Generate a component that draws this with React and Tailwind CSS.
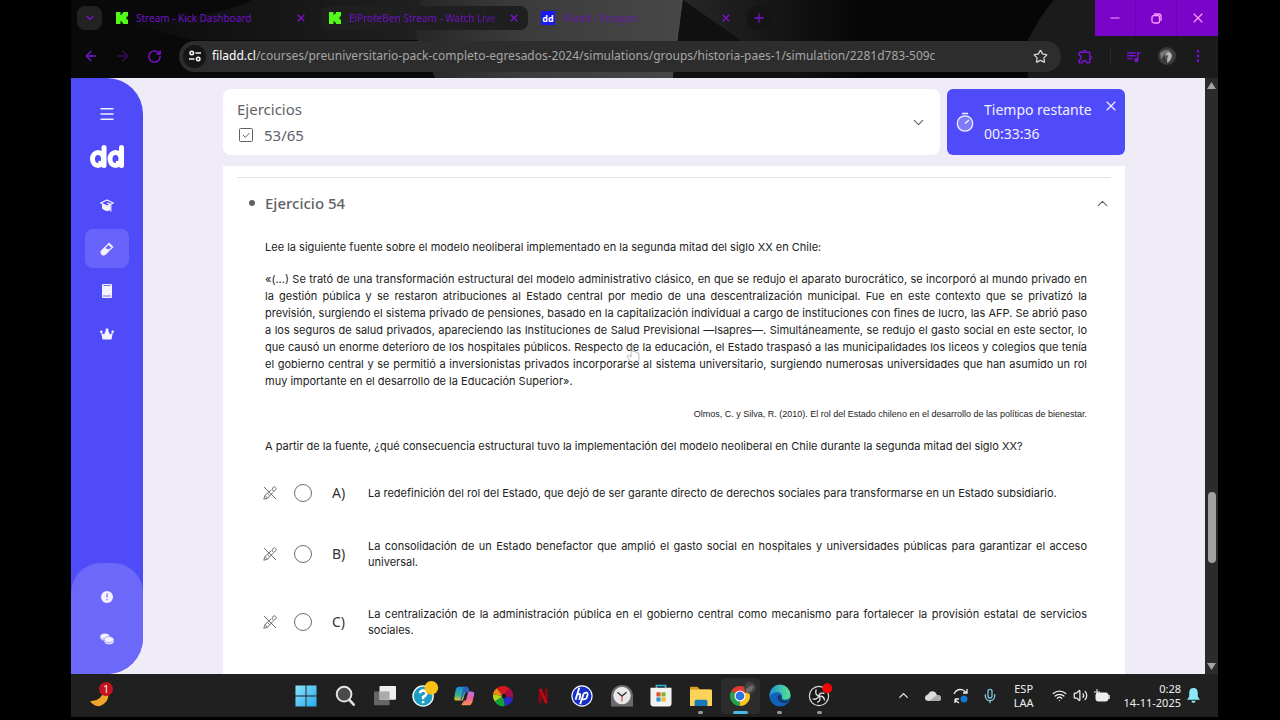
import {
  ArrowLeft,
  ArrowRight,
  ChevronDown,
  ChevronUp,
  EllipsisVertical,
  Menu,
  Mic,
  Minus,
  Plus,
  RotateCw,
  Star,
  Volume2,
  Wifi,
  X,
} from 'lucide-react';
import { MdOutlineExtension, MdQueueMusic } from 'react-icons/md';

const answers = [
  {
    letter: 'A',
    text: 'La redefinición del rol del Estado, que dejó de ser garante directo de derechos sociales para transformarse en un Estado subsidiario.',
  },
  {
    letter: 'B',
    text: 'La consolidación de un Estado benefactor que amplió el gasto social en hospitales y universidades públicas para garantizar el acceso universal.',
  },
  {
    letter: 'C',
    text: 'La centralización de la administración pública en el gobierno central como mecanismo para fortalecer la provisión estatal de servicios sociales.',
  },
];

function KickIcon() {
  return (
    <svg className="w-3 h-3 shrink-0" viewBox="0 0 12 12" fill="#53fc18">
      <path d="M0 0h4.500v3h1V1.500h1.500V0h5v4.500h-1.500V7.500H12V12H7v-1.500H5.500V9h-1v3H0z" />
    </svg>
  );
}

function FiladdIcon() {
  return (
    <span className="flex w-[14px] h-[14px] shrink-0 items-center justify-center bg-[#1a1af0] text-[9px] leading-none font-bold text-white">
      dd
    </span>
  );
}

function Tab({ icon, title, className, titleClass }) {
  return (
    <div className={`flex h-6 items-center rounded-lg pl-2 pr-2 ${className}`}>
      {icon}
      <button className={`ml-2 flex-1 whitespace-nowrap text-left text-[10px] text-[#6f10c8] ${titleClass || ''}`}>
        {title}
      </button>
      <button aria-label="Cerrar pestaña" className="text-[#8312e0]">
        <X size={12} strokeWidth={2.25} />
      </button>
    </div>
  );
}

function BrowserBar() {
  return (
    <header className="relative h-[78px] shrink-0 bg-[#090909] text-[#7a12d8]">
      {/* Theme artwork behind the tabs */}
      <svg className="absolute inset-0 h-full w-full" viewBox="0 0 1147 78" preserveAspectRatio="none">
        <defs>
          <linearGradient id="beam" x1="0" x2="1">
            <stop offset="0" stopColor="#262626" />
            <stop offset="0.4" stopColor="#3c3c3c" />
            <stop offset="1" stopColor="#474747" />
          </linearGradient>
          <linearGradient id="haze" x1="0" x2="1">
            <stop offset="0" stopColor="#0c0c0c" />
            <stop offset="1" stopColor="#202020" />
          </linearGradient>
          <linearGradient id="right" x1="0" x2="1">
            <stop offset="0" stopColor="#262626" />
            <stop offset="1" stopColor="#070606" />
          </linearGradient>
        </defs>
        <path d="M60 24Q160 14 180 0H350V40H120z" fill="url(#haze)" />
        <path d="M350 0H612L602 78H364L345 36z" fill="url(#beam)" />
        <path d="M612 0L724 78H602z" fill="#101010" />
        <path d="M612 0H790V78H724z" fill="url(#right)" />
        <path d="M790 0H983Q970 14 957 40V78H790z" fill="#070606" />
        <path d="M983 0H1147V78H957V40Q970 14 983 0z" fill="#1b1b1b" />
      </svg>

      <div className="relative flex h-9 items-center pl-[6px]">
        <button aria-label="Buscar pestañas" className="mr-[6px] flex h-6 w-[25px] items-center justify-center rounded-lg bg-[#222]">
          <ChevronDown size={12} strokeWidth={2.5} />
        </button>
        <Tab icon={<KickIcon />} title="Stream - Kick Dashboard" className="w-[207px]" />
        <Tab
          icon={<KickIcon />}
          title="ElProfeBen Stream - Watch Live"
          className="ml-[6px] w-[207px] bg-[#1f1f1f]"
          titleClass="mask-r-from-85%"
        />
        <Tab icon={<FiladdIcon />} title="Filadd - Ensayos" className="ml-[5px] w-[207px]" titleClass="opacity-80" />
        <button aria-label="Nueva pestaña" className="ml-[7px] flex h-6 w-6 items-center justify-center rounded-full bg-[#141414]">
          <Plus size={14} strokeWidth={2.25} />
        </button>
        <div className="ml-auto flex h-9 bg-[#7a04c8] text-[#ff9dff]">
          <button aria-label="Minimizar" className="flex w-[41px] items-center justify-center border-r border-[#6a04b4]">
            <Minus size={14} />
          </button>
          <button aria-label="Restaurar" className="flex w-[41px] items-center justify-center border-r border-[#6a04b4]">
            <svg width="11" height="11" viewBox="0 0 11 11" fill="none" stroke="currentColor" strokeWidth="1.3">
              <rect x="1" y="2.5" width="7.5" height="7.5" rx="2" />
              <path d="M3 1H7.500Q10 1 10 3.500V8" />
            </svg>
          </button>
          <button aria-label="Cerrar" className="flex w-[41px] items-center justify-center">
            <X size={16} strokeWidth={1.75} />
          </button>
        </div>
      </div>

      <div className="relative flex h-10 items-center pl-3 pr-[12px]">
        <div className="flex w-24 shrink-0 gap-4">
          <button aria-label="Atrás"><ArrowLeft size={16} strokeWidth={2} /></button>
          <button aria-label="Adelante" className="text-[#3a0d66]"><ArrowRight size={16} strokeWidth={2} /></button>
          <button aria-label="Recargar"><RotateCw size={15} strokeWidth={2.25} /></button>
        </div>
        <div className="flex h-[31px] flex-1 items-center rounded-full bg-[#2d2d2d] pl-1 pr-[13px] text-[12px]">
          <button aria-label="Información del sitio" className="mr-[6px] flex h-[23px] w-[23px] items-center justify-center rounded-full bg-[#161616]">
            <svg width="12" height="12" viewBox="0 0 12 12" fill="none" stroke="#f4f4f4" strokeWidth="1.600">
              <circle cx="2.800" cy="3" r="1.700" />
              <path d="M6.500 3H12M0 9H5.500" />
              <circle cx="9.200" cy="9" r="1.700" />
            </svg>
          </button>
          <label htmlFor="url" className="text-white">filadd.cl</label>
          <input
            id="url"
            className="min-w-0 flex-1 bg-transparent text-[#a6a6a6] outline-none"
            defaultValue="/courses/preuniversitario-pack-completo-egresados-2024/simulations/groups/historia-paes-1/simulation/2281d783-509c"
          />
          <button aria-label="Favorito" className="text-[#d8d8d8]"><Star size={15} strokeWidth={2} /></button>
        </div>
        <div className="flex shrink-0 items-center pl-4">
          <button aria-label="Extensiones"><MdOutlineExtension size={17} /></button>
          <span className="ml-4 h-4 w-px bg-[#2b2b2b]" />
          <button aria-label="Multimedia" className="ml-[14px]"><MdQueueMusic size={17} /></button>
          <button aria-label="Perfil" className="ml-4">
            <svg width="18" height="18" viewBox="0 0 18 18">
              <circle cx="9" cy="9" r="9" fill="#3c3c3c" />
              <path d="M8 6Q13 3 14 9 13 14 9 16 10 12 7 10z" fill="#b5b5b5" />
              <path d="M2 6Q7 1 13 4 6 6 3 13z" fill="#777" />
              <path d="M7 9L10 8 9 13z" fill="#4a4a4a" />
            </svg>
          </button>
          <button aria-label="Menú" className="ml-[14px]"><EllipsisVertical size={16} /></button>
        </div>
      </div>
    </header>
  );
}

function Sidebar() {
  return (
    <nav className="flex w-[72px] shrink-0 flex-col items-center overflow-hidden rounded-r-[36px] bg-[#504bf9] text-[#f4f2ff]">
      <button aria-label="Menú" className="mt-[27px]"><Menu size={18} strokeWidth={1.75} /></button>
      {/* dd logo */}
      <svg className="mt-[22px] h-6 w-[35px]" viewBox="0 0 35 24" fill="none" stroke="#fff" strokeWidth="5" strokeLinecap="round">
        <ellipse cx="8" cy="14" rx="5.500" ry="6.500" />
        <path d="M14 2.500V20.500" />
        <ellipse cx="25.500" cy="14" rx="5.500" ry="6.500" />
        <path d="M31.500 2.500V20.500" />
        <path d="M9.500 17L13 21M27 17L30.500 21" strokeWidth="2.500" />
      </svg>
      <a href="#cursos" aria-label="Cursos" className="mt-7 flex h-4 items-center">
        <svg width="14" height="13" viewBox="0 0 14 13" fill="none" stroke="currentColor">
          <path d="M7 1L13.300 4 7 7 .7 4z" strokeWidth="1.200" />
          <path d="M2.500 5.500V9.500Q7 13 9.500 11V6.500L7 8z" fill="currentColor" />
          <path d="M7 4L10.800 5.500V12.500" strokeWidth="1.200" />
        </svg>
      </a>
      <a href="#ensayos" aria-label="Ensayos" className="mt-4 flex h-[39px] w-11 items-center justify-center rounded-lg bg-[#6863fa]">
        <svg width="14" height="14" viewBox="0 0 14 14">
          <path d="M8.500 2L12 5.500 5.500 12Q3.500 13.800 1.800 12.200 .2 10.500 2 8.500z" fill="none" stroke="currentColor" strokeWidth="1.200" />
          <path d="M4.500 6L9.500 7.500 5.500 12Q3.500 13.800 1.800 12.200 .2 10.500 2 8.500z" fill="currentColor" />
          <path d="M8.500 1L13 5.500" stroke="currentColor" strokeWidth="1.500" />
        </svg>
      </a>
      <a href="#libros" aria-label="Libros" className="mt-4 flex h-[14px] items-center">
        <svg width="10" height="14" viewBox="0 0 10 14">
          <rect width="10" height="14" rx="1" fill="currentColor" />
          <path d="M1.500 1.500H8.500M1 12H9" stroke="#504bf9" strokeWidth="0.800" />
        </svg>
      </a>
      <a href="#premium" aria-label="Premium" className="mt-[30px]">
        <svg width="14" height="12" viewBox="0 0 14 12" fill="currentColor">
          <path d="M2.500 11.500L1.200 4.500 4 6.500 5.800 2.500H8.200L10 6.500 12.800 4.500 11.500 11.500z" />
          <circle cx="7" cy="1.800" r="1.500" />
          <circle cx="1.300" cy="3.800" r="1.300" />
          <circle cx="12.700" cy="3.800" r="1.300" />
        </svg>
      </a>
      <div className="mt-auto flex h-[111px] w-full flex-col items-center rounded-t-[30px] bg-[#6c68fa]">
        <button aria-label="Ayuda" className="mt-7">
          <svg width="12" height="12" viewBox="0 0 12 12">
            <circle cx="6" cy="6" r="6" fill="currentColor" />
            <path d="M6 2.500V6.500M6 8V9.300" stroke="#6c68fa" strokeWidth="1.200" />
          </svg>
        </button>
        <button aria-label="Monedas" className="mt-[30px]">
          <svg width="14" height="12" viewBox="0 0 14 12" stroke="#6c68fa" strokeWidth="0.500" fill="currentColor">
            <path d="M0 3.500V5.500Q2 8 5 8L9 5V3.500z" />
            <ellipse cx="5" cy="3.300" rx="5" ry="3" />
            <path d="M4 7V9Q6 12 10 11.500 14 11 14 8.500V6.500z" />
            <ellipse cx="9" cy="6.500" rx="5" ry="3" />
          </svg>
        </button>
      </div>
    </nav>
  );
}

function Answer({ letter, text }) {
  return (
    <li className="flex items-center">
      <button aria-label={`Descartar alternativa ${letter}`} className="w-[33px] shrink-0 pl-[2px] text-[#707070]">
        <svg width="14" height="14" viewBox="0 0 14 14" fill="none" stroke="currentColor" strokeLinejoin="round">
          <path d="M9 3.500L10.500 1Q11.500 .3 12.700 1.500 13.700 2.700 12.800 3.800L10.500 5.500z" />
          <path d="M8 4L2 9.500 .8 13.200 4.500 12.300 10 6.300M4.500 7.500L6.500 9.500M2 9.500L4.500 12.300" />
          <path d="M1 1L13 13" />
        </svg>
      </button>
      <input
        type="radio"
        name="respuesta"
        id={`respuesta-${letter}`}
        className="h-[18px] w-[18px] shrink-0 appearance-none rounded-full border border-[#6d6d6d] checked:border-4"
      />
      <label htmlFor={`respuesta-${letter}`} className="flex flex-1 items-center pl-5">
        <span className="w-9 shrink-0 text-[14px] leading-4 text-[#333]">{letter})</span>
        <span className="flex-1 text-justify font-['Inter',sans-serif] text-[11px] leading-4">{text}</span>
      </label>
    </li>
  );
}

function Exercise() {
  return (
    <section className="min-h-0 flex-1 overflow-hidden bg-white px-[14px] pt-[11px]">
      <button className="flex w-full items-center border-t border-[#e2e2e2] pt-[13px] text-left text-[#606166]">
        <span className="ml-3 h-[6px] w-[6px] rounded-full bg-current" />
        <span className="ml-[10px] flex-1 text-[15px] leading-6 font-medium">Ejercicio 54</span>
        <ChevronUp size={17} strokeWidth={1.5} />
      </button>

      <div className="mt-6 ml-7 mr-6 text-justify font-['Inter',sans-serif] text-[11px] leading-4 text-[#222]">
        <p>Lee la siguiente fuente sobre el modelo neoliberal implementado en la segunda mitad del siglo XX en Chile:</p>
        <p className="mt-4 leading-[17px]">
          «(...) Se trató de una transformación estructural del modelo administrativo clásico, en que se redujo el aparato
          burocrático, se incorporó al mundo privado en la gestión pública y se restaron atribuciones al Estado central por
          medio de una descentralización municipal. Fue en este contexto que se privatizó la previsión, surgiendo el sistema
          privado de pensiones, basado en la capitalización individual a cargo de instituciones con fines de lucro, las AFP.
          Se abrió paso a los seguros de salud privados, apareciendo las Instituciones de Salud Previsional —Isapres—.
          Simultáneamente, se redujo el gasto social en este sector, lo que causó un enorme deterioro de los hospitales
          públicos. Respecto de la educación, el Estado traspasó a las municipalidades los liceos y colegios que tenía el
          gobierno central y se permitió a inversionistas privados incorporarse al sistema universitario, surgiendo numerosas
          universidades que han asumido un rol muy importante en el desarrollo de la Educación Superior».
        </p>
        <p className="mt-4 text-right font-['Liberation_Sans',sans-serif] text-[9px]">
          Olmos, C. y Silva, R. (2010). El rol del Estado chileno en el desarrollo de las políticas de bienestar.
        </p>
        <p className="mt-4">
          A partir de la fuente, ¿qué consecuencia estructural tuvo la implementación del modelo neoliberal en Chile durante la
          segunda mitad del siglo XX?
        </p>
      </div>

      <ul className="mt-[30px] mx-6 flex flex-col gap-9 text-[#222]">
        {answers.map(a => <Answer key={a.letter} letter={a.letter} text={a.text} />)}
      </ul>
    </section>
  );
}

function Content() {
  return (
    <main className="flex min-w-0 flex-1 flex-col px-20 pt-[11px]">
      <div className="mb-[11px] flex gap-[7px]">
        <button className="flex flex-1 items-center rounded-lg bg-white py-2 pl-[14px] pr-[13px] text-left text-[15px] leading-6 text-[#606166]">
          <span className="flex-1">
            <span className="block">Ejercicios</span>
            <span className="mt-[2px] flex items-center">
              <svg className="mx-[2px]" width="14" height="14" viewBox="0 0 14 14" fill="none" stroke="currentColor">
                <rect x=".5" y=".5" width="13" height="13" rx="1" />
                <path d="M4 7L6.300 9.300 10.500 5" />
              </svg>
              <span className="ml-[9px]">53/65</span>
            </span>
          </span>
          <ChevronDown size={17} strokeWidth={1.5} />
        </button>
        <div className="flex w-[178px] items-center rounded-md bg-[#4f4bfa] pl-[9px] pr-[6px] text-[14px] leading-6 text-[#f2f0ff]">
          <svg width="18" height="20" viewBox="0 0 18 20" fill="none" stroke="currentColor">
            <circle cx="9" cy="11.500" r="7.700" fill="#7f7cfc" strokeWidth="1.300" />
            <path d="M6 1.500H12M9 11.500L13 8" strokeWidth="1.500" />
          </svg>
          <div className="ml-[10px] flex-1 whitespace-nowrap">
            <p>Tiempo restante</p>
            <p>00:33:36</p>
          </div>
          <button aria-label="Cerrar" className="self-start pt-[9px]"><X size={16} strokeWidth={1.75} /></button>
        </div>
      </div>
      <Exercise />
    </main>
  );
}

function Scrollbar() {
  return (
    <div className="flex w-[13px] shrink-0 flex-col items-center bg-[#2b2b2b] py-1">
      <svg width="9" height="7" viewBox="0 0 9 7" fill="#a3a3a3"><path d="M4.500 0L9 7H0z" /></svg>
      <div className="grow-[402]" />
      <div className="w-2 grow-[70] rounded-full bg-[#a0a0a0]" />
      <div className="grow-[100]" />
      <svg width="9" height="7" viewBox="0 0 9 7" fill="#a3a3a3"><path d="M0 0H9L4.500 7z" /></svg>
    </div>
  );
}

function TaskIcon({ label, running, active, children }) {
  return (
    <button
      aria-label={label}
      className={`relative flex h-9 items-center justify-center rounded ${active ? 'bg-[#2c2c2c]' : ''}`}
    >
      <svg className="overflow-visible" width="22" height="22" viewBox="0 0 24 24">{children}</svg>
      {running && (
        <span className={`absolute bottom-0 h-[3px] rounded-full ${active ? 'w-[15px] bg-[#4cb8e8]' : 'w-[5px] bg-[#999]'}`} />
      )}
    </button>
  );
}

function Taskbar() {
  return (
    <footer className="mb-[3px] flex h-[43px] shrink-0 items-center bg-[#202020] pr-[18px] text-[#f0f0f0]">
      <button aria-label="Tiempo" className="ml-[17px]">
        <svg width="28" height="28" viewBox="0 0 28 28">
          <path d="M20 10Q22 20 12 24 6 25 2 19 13 20 16 8z" fill="#efa72b" />
          <circle cx="18" cy="7" r="7" fill="#c4131d" />
          <text x="18" y="11" textAnchor="middle" fontSize="10" fill="#fff">1</text>
        </svg>
      </button>
      <div className="ml-[170px] grid w-[553px] shrink-0 grid-cols-[repeat(14,minmax(0,1fr))]">
        <TaskIcon label="Inicio">
          <defs>
            <linearGradient id="win" x1="0" y1="0" x2="1" y2="1">
              <stop offset="0" stopColor="#8be3fb" />
              <stop offset="1" stopColor="#25a9ec" />
            </linearGradient>
          </defs>
          <path d="M0.500 .5H11.500V11.500H.5zM12.500 .5H23.500V11.500H12.500zM.5 12.500H11.500V23.500H.5zM12.500 12.500H23.500V23.500H12.500z" fill="url(#win)" />
        </TaskIcon>
        <TaskIcon label="Buscar">
          <circle cx="11" cy="10" r="8" fill="#4a4a4a" stroke="#e4e4e4" strokeWidth="2.200" />
          <path d="M17 16.500L21.500 21.500" stroke="#e4e4e4" strokeWidth="2.800" strokeLinecap="round" />
        </TaskIcon>
        <TaskIcon label="Vista de tareas">
          <rect x="0" y="7" width="17" height="15" rx="1" fill="#666" />
          <rect x="6" y="1" width="18" height="15" rx="1" fill="#eee" />
          <rect x="6" y="7" width="11" height="9" fill="#aaa" />
        </TaskIcon>
        <TaskIcon label="Ayuda">
          <circle cx="11" cy="12" r="11" fill="#1d9cc4" stroke="#fff" strokeWidth="1.500" />
          <path d="M7.500 9Q8 6 11 6 15 6.500 14.500 10 14 12 11 13V15.500M11 17.500V20" fill="none" stroke="#fff" strokeWidth="2.700" />
          <circle cx="20" cy="3" r="7.500" fill="#fcc114" />
        </TaskIcon>
        <TaskIcon label="Copilot">
          <defs>
            <linearGradient id="copA" x1="0" y1="0" x2="0" y2="1">
              <stop offset="0" stopColor="#1b8bd9" />
              <stop offset="0.6" stopColor="#35b38a" />
              <stop offset="1" stopColor="#ecc12c" />
            </linearGradient>
            <linearGradient id="copB" x1="0" y1="0" x2="0" y2="1">
              <stop offset="0" stopColor="#b070f0" />
              <stop offset="0.5" stopColor="#f0609a" />
              <stop offset="1" stopColor="#f89048" />
            </linearGradient>
          </defs>
          <path d="M6 2H15L11 17H4Q.5 17 1.500 13L3 5Q4 2 6 2z" fill="url(#copA)" />
          <path d="M14 7H20Q24 7 23 11L21 19Q20 22 17 22H9L12 17z" fill="url(#copB)" />
          <path d="M13 2H15Q17 2 18 7H14Q12 7 11.500 9L9.500 17H8L11 4Q11.500 2 13 2z" fill="#2860c8" />
          <path d="M14 8L11 17H14L16.500 8z" fill="#202020" />
        </TaskIcon>
        <TaskIcon label="Colores">
          <path d="M12 12L5 3.500A11 11 0 0 1 19 3.500z" fill="#d8171e" />
          <path d="M12 12L19 3.500A11 11 0 0 1 23 14z" fill="#a80c48" />
          <path d="M12 12L23 14A11 11 0 0 1 14 23z" fill="#2a2acb" />
          <path d="M12 12L14 23A11 11 0 0 1 3 18z" fill="#12a235" />
          <path d="M12 12L3 18A11 11 0 0 1 1 10z" fill="#b5d51d" />
          <path d="M12 12L1 10A11 11 0 0 1 5 3.500z" fill="#f08a18" />
          <circle cx="13" cy="12" r="2.500" fill="#1c1c1c" />
        </TaskIcon>
        <TaskIcon label="Netflix">
          <path d="M9 4V20M15.500 4V20" stroke="#8f0710" strokeWidth="3" />
          <path d="M7.500 4H10.500L17 20H14z" fill="#c00a14" />
        </TaskIcon>
        <TaskIcon label="HP">
          <circle cx="12" cy="12" r="11" fill="#1430c8" stroke="#fff" strokeWidth="1.200" />
          <path d="M9 3L5 16M6.500 11Q11 8 10 12L9 16M14 9L10 21M14 9Q19 7 18 11L17 14Q16 16 12.500 15.500" fill="none" stroke="#fff" strokeWidth="2" />
        </TaskIcon>
        <TaskIcon label="Reloj">
          <path d="M0 23.500V12A12 12 0 0 1 24 12V23.500z" fill="#686c70" />
          <circle cx="12" cy="11.500" r="9.500" fill="#e8e8e8" />
          <path d="M7 8L12 12 17 8" fill="none" stroke="#333" strokeWidth="1.500" />
          <path d="M12 12V18" stroke="#d04040" strokeWidth="1.200" />
        </TaskIcon>
        <TaskIcon label="Microsoft Store">
          <path d="M7 4V.5H17V4" fill="none" stroke="#31b2df" strokeWidth="1.800" />
          <path d="M.5 3H23.500V20Q23.500 23.500 20 23.500H4Q.5 23.500 .5 20z" fill="#f2f2f2" />
          <path d="M7 8H11.500V12.500H7z" fill="#e5502a" />
          <path d="M12.500 8H17V12.500H12.500z" fill="#7fb728" />
          <path d="M7 13.500H11.500V18H7z" fill="#2497dc" />
          <path d="M12.500 13.500H17V18H12.500z" fill="#f5b922" />
        </TaskIcon>
        <TaskIcon label="Explorador" running>
          <path d="M0 3Q0 2 1 2H8L11 5H22V10H0z" fill="#d59d1c" />
          <rect x="0" y="5" width="24" height="18" rx="1" fill="#fbd358" />
          <path d="M5 23V18Q5 16 7 16H17Q19 16 19 18V23z" fill="#1878b8" />
        </TaskIcon>
        <TaskIcon label="Chrome" running active>
          <path d="M12 12L2.500 6.500A11 11 0 0 1 21.500 6.500z" fill="#e23a2e" />
          <path d="M12 12L21.500 6.500A11 11 0 0 1 12 23z" fill="#fbc31b" />
          <path d="M12 12V23A11 11 0 0 1 2.500 6.500z" fill="#29a04b" />
          <circle cx="12" cy="12" r="6" fill="#fff" />
          <circle cx="12" cy="12" r="4.800" fill="#2f73df" />
          <circle cx="23" cy="3" r="6.500" fill="#414141" />
          <path d="M18 6Q22 -1 27 1 27 6 20 9z" fill="#6c6c6c" />
        </TaskIcon>
        <TaskIcon label="Edge" running>
          <defs>
            <linearGradient id="edge" x1="0" y1="0" x2="1" y2="0">
              <stop offset="0" stopColor="#1e8fd8" />
              <stop offset="1" stopColor="#5be58a" />
            </linearGradient>
          </defs>
          <circle cx="12" cy="12" r="11.500" fill="#1263b8" />
          <path d="M.5 11A11.500 11.500 0 0 1 23.500 11Q23.500 16 17 16 13 16 14 12 14 8 9 8 3 8 .7 13z" fill="url(#edge)" />
          <path d="M14 12Q13 16 17 17 20 17 22 15.500L19 20Q10 20 9 14 9 9 14 12z" fill="#123c70" />
        </TaskIcon>
        <TaskIcon label="OBS" running>
          <circle cx="12" cy="12" r="10.500" fill="#191919" stroke="#ddd" strokeWidth="1.300" />
          <path d="M9 5Q7 11 12 12M18 9Q12 8 12 12M10 19Q15 17 12 12M5 15Q9 17 12 12M18 17Q18 12 12 12" fill="none" stroke="#ddd" strokeWidth="1.500" />
          <circle cx="21" cy="3.500" r="5.500" fill="#f00808" />
        </TaskIcon>
      </div>

      <div className="ml-auto flex items-center">
        <button aria-label="Iconos ocultos"><ChevronUp size={15} /></button>
        <svg className="ml-[14px]" width="16" height="12" viewBox="0 0 16 12">
          <path d="M4 11Q0 11 0 8 0 5 3 4.500 5 0 9 1.500 11 2 12 5 16 5 16 8 16 11 13 11z" fill="#dcdcdc" />
          <path d="M4 11L12 5Q16 5 16 8 16 11 13 11z" fill="#aaa" />
        </svg>
        <svg className="ml-3" width="16" height="16" viewBox="0 0 16 16" fill="none" stroke="#eee" strokeWidth="1.300">
          <path d="M1 6Q4 0 10 2L14 5M14 1V5H10M6 15L2 12V15M2 11H6" />
          <circle cx="11" cy="11" r="3.500" fill="#1478d0" stroke="none" />
        </svg>
        <Mic className="ml-[13px] text-[#7fc4d8]" size={16} />
        <button className="ml-4 text-center text-[11px] leading-[14px]">ESP<br />LAA</button>
        <button aria-label="Red y sonido" className="ml-[18px] flex items-center gap-[6px]">
          <Wifi size={15} />
          <Volume2 size={15} />
          <svg width="16" height="14" viewBox="0 0 16 14">
            <rect x="2" y="4" width="12" height="8" rx="2" fill="#eee" stroke="#eee" />
            <path d="M15 6V10" stroke="#eee" strokeWidth="1.500" />
            <path d="M3 0V6M0 3H6" stroke="#eee" />
          </svg>
        </button>
        <button className="ml-[14px] text-right text-[11px] leading-[14px] whitespace-nowrap">0:28<br />14-11-2025</button>
        <svg className="ml-[6px]" width="13" height="15" viewBox="0 0 12 14" fill="#8be9f5">
          <path d="M6 0Q10 0 10 5V8L12 11H0L2 8V5Q2 0 6 0zM4 12H8Q8 14 6 14 4 14 4 12z" />
        </svg>
      </div>
    </footer>
  );
}

function App() {
  return (
    <div className="flex h-screen flex-col overflow-hidden bg-black pl-[71px] pr-[62px] font-['Noto_Sans','Open_Sans',sans-serif]">
      <BrowserBar />
      <div className="relative flex min-h-0 flex-1 bg-[#efecf8]">
        <Sidebar />
        <Content />
        <Scrollbar />
        {/* Hand pointer */}
        <svg className="absolute top-[266px] left-[555px]" width="15" height="20" viewBox="0 0 15 20" fill="none" stroke="#aaa" strokeWidth="0.800">
          <path d="M5 11V2Q6 0 7 2V8Q8 6 9 8 10 7 11 9 13 8 13 11V15Q12 18 10 19H6Q4 17 1 12 2 10 5 13z" />
        </svg>
      </div>
      <Taskbar />
    </div>
  );
}

export default App;
